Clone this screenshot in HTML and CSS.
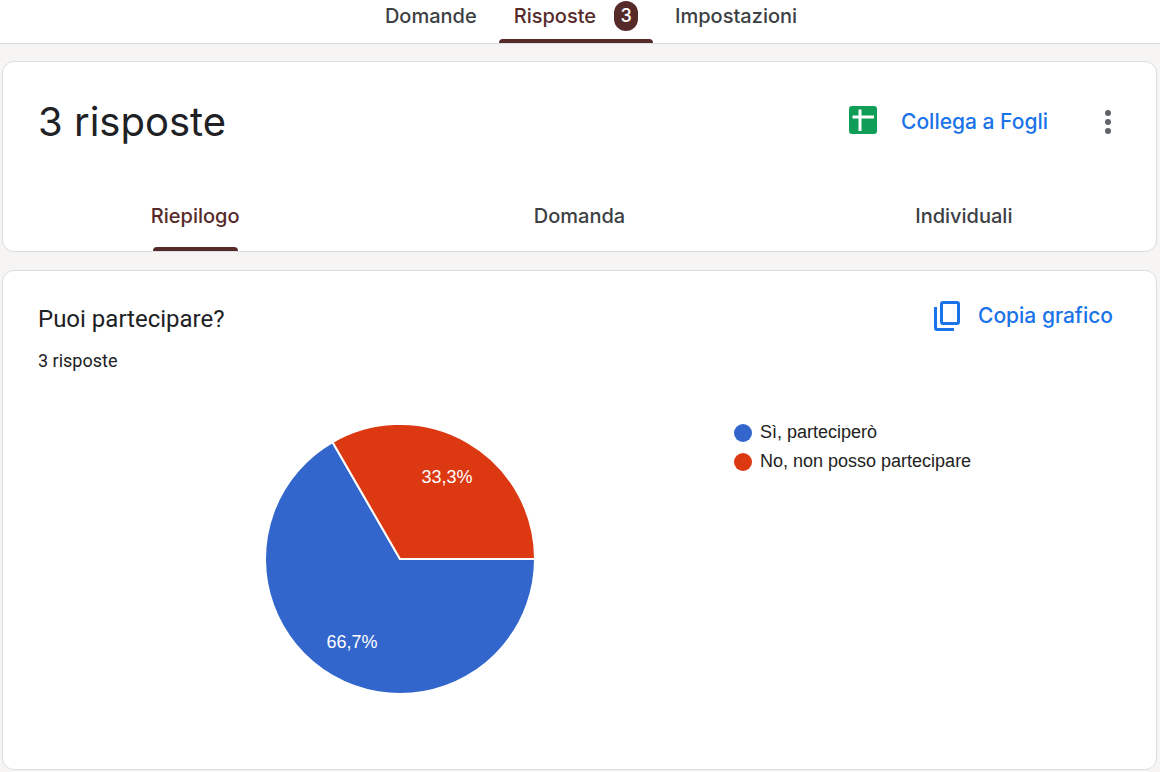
FILE: index.html
```html
<!DOCTYPE html>
<html lang="it">
<head>
<meta charset="utf-8">
<title>Risposte</title>
<link rel="stylesheet" href="styles.css">
</head>
<body>
<nav class="topbar">
  <button class="top-tab" type="button">Domande</button>
  <button class="top-tab top-tab-active" type="button">Risposte <span class="badge">3</span></button>
  <button class="top-tab" type="button">Impostazioni</button>
</nav>
<main class="page">
  <section class="card">
    <header class="summary-head">
      <h1 class="summary-title">3 risposte</h1>
      <button class="action sheets" type="button">
        <svg class="sheets-icon" width="28" height="28" viewBox="0 0 28 28" aria-hidden="true"><rect width="28" height="28" rx="3" fill="#0f9d58"/><path d="M3.500 11H25M11 3.500V25" stroke="#fff" stroke-width="3" fill="none"/></svg>
        Collega a Fogli
      </button>
      <button class="more" type="button" aria-label="Altre opzioni">
        <svg width="8" height="24" viewBox="0 0 8 24" aria-hidden="true"><g fill="#5f6368"><circle cx="4" cy="3" r="3"/><circle cx="4" cy="12" r="3"/><circle cx="4" cy="21" r="3"/></g></svg>
      </button>
    </header>
    <nav class="views">
      <button class="view view-active" type="button">Riepilogo</button>
      <button class="view" type="button">Domanda</button>
      <button class="view" type="button">Individuali</button>
    </nav>
  </section>
  <section class="card question">
    <header class="question-head">
      <div>
        <h2 class="question-title">Puoi partecipare?</h2>
        <p class="question-count">3 risposte</p>
      </div>
      <button class="action copy" type="button">
        <svg width="26" height="30" viewBox="0 0 26 30" fill="none" stroke="#1a73e8" stroke-width="3" aria-hidden="true"><rect x="7.500" y="1.500" width="17" height="21" rx="1.500"/><path d="M1.500 6V27Q1.500 28.500 3 28.500H20"/></svg>
        Copia grafico
      </button>
    </header>
    <div class="chart">
      <svg class="pie" width="270" height="270" viewBox="0 0 270 270" role="img" aria-label="Grafico a torta">
        <g stroke="#fff" stroke-width="2">
          <path fill="#3366cc" d="M135 135H270A135 135 0 1 1 67.500 18.090Z"/>
          <path fill="#dc3912" d="M135 135L67.500 18.090A135 135 0 0 1 270 135Z"/>
        </g>
        <g class="pie-label">
          <text x="182" y="59">33,3%</text>
          <text x="87" y="224">66,7%</text>
        </g>
      </svg>
      <ul class="legend">
        <li class="legend-item"><span class="dot dot-yes"></span>Sì, parteciperò</li>
        <li class="legend-item"><span class="dot dot-no"></span>No, non posso partecipare</li>
      </ul>
    </div>
  </section>
</main>
</body>
</html>
```
FILE: styles.css
```css
* { box-sizing: border-box; }
body {
  margin: 0;
  background: #f6f5f4;
  color: #202124;
  font-family: Inter, Roboto, sans-serif;
}
button {
  border: 0;
  padding: 0;
  background: none;
  color: #3c4043;
  font: 500 20px/24px Inter, Roboto, sans-serif;
  cursor: pointer;
}
h1, h2, p, ul { margin: 0; padding: 0; font-weight: 400; }
.topbar {
  display: flex;
  justify-content: center;
  height: 44px;
  padding-left: 22px;
  background: #fff;
  border-bottom: 1px solid #dadce0;
}
.top-tab {
  display: flex;
  align-items: center;
  padding: 0 22px 12px;
}
.top-tab-active {
  position: relative;
  gap: 18px;
  padding: 0 15px 12px;
  color: #572a2a;
}
.top-tab-active::after, .view-active::after {
  content: "";
  position: absolute;
  bottom: 0;
  height: 4px;
  border-radius: 4px 4px 0 0;
  background: #572a2a;
}
.top-tab-active::after { left: 0; right: 0; }
.badge {
  width: 24px;
  border-radius: 12px;
  background: #572a2a;
  color: #fff;
  font-size: 18px;
  line-height: 30px;
  text-align: center;
}
.page {
  display: flex;
  flex-direction: column;
  gap: 18px;
  padding: 17px 3px 2px 2px;
}
.card {
  background: #fff;
  border: 1px solid #dadce0;
  border-radius: 12px;
}
.summary-head {
  display: flex;
  align-items: center;
  padding: 30px 44px 30px 35px;
}
.summary-title {
  flex: 1;
  font-size: 40px;
  line-height: 60px;
}
.action {
  display: flex;
  align-items: center;
  color: #1a73e8;
  font-size: 21px;
}
.sheets { gap: 24px; }
.sheets-icon { margin-bottom: 4px; }
.more { display: flex; margin-left: 56px; }
.views { display: grid; grid-template-columns: repeat(3, 1fr); }
.view {
  position: relative;
  justify-self: center;
  padding: 22px 0 23px;
}
.view-active { color: #572a2a; }
.view-active::after { left: 2px; right: 2px; }
.question { padding: 30px 43px 75px 35px; }
.question-head {
  display: flex;
  justify-content: space-between;
  align-items: flex-start;
}
.question-title { font: 400 24px/36px Roboto, sans-serif; }
.question-count { margin-top: 12px; font: 400 18px/24px Roboto, sans-serif; }
.copy { gap: 18px; }
.chart {
  display: grid;
  grid-template-columns: 468px 1fr;
  align-items: start;
  margin-top: 51px;
  padding-left: 227px;
  font: 400 18px/29px "Liberation Sans", Arial, sans-serif;
}
.pie-label { fill: #fff; text-anchor: middle; }
.legend { padding-left: 1px; margin-top: -6px; list-style: none; }
.legend-item { display: flex; align-items: center; gap: 8px; color: #222; }
.dot { width: 18px; height: 18px; border-radius: 50%; }
.dot-yes { background: #3366cc; }
.dot-no { background: #dc3912; }
```
